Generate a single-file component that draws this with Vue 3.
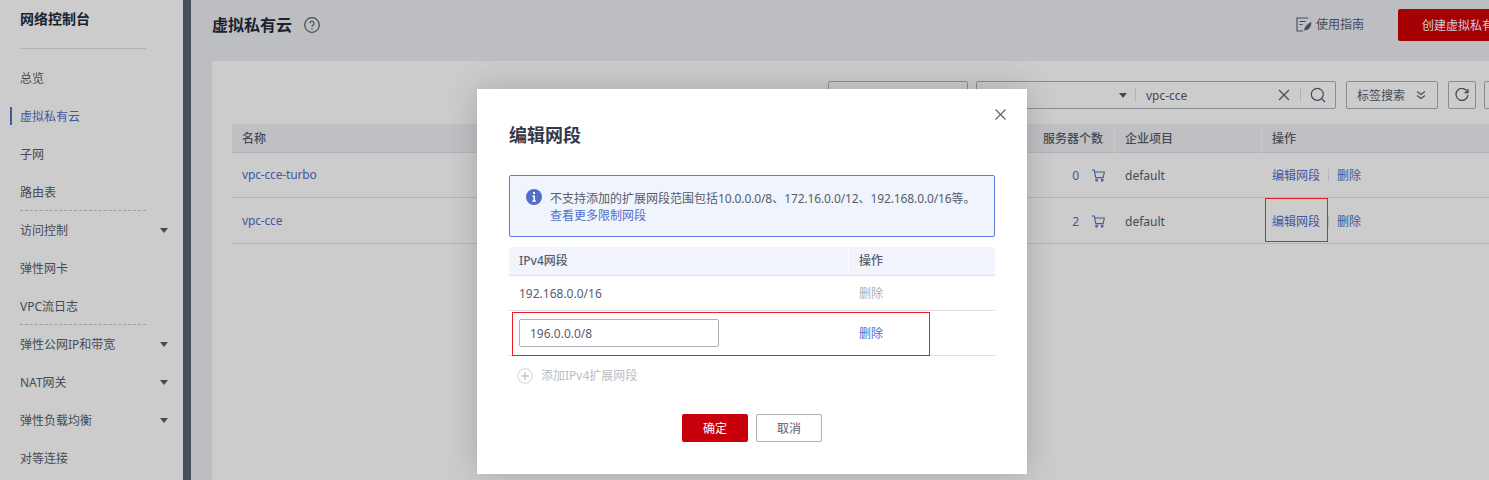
<script setup>
const navItems = [
  { label: '总览' },
  { label: '虚拟私有云', active: true },
  { label: '子网' },
  { label: '路由表', dashed: true },
  { label: '访问控制', arrow: true },
  { label: '弹性网卡' },
  { label: 'VPC流日志', dashed: true },
  { label: '弹性公网IP和带宽', arrow: true },
  { label: 'NAT网关', arrow: true },
  { label: '弹性负载均衡', arrow: true },
  { label: '对等连接' }
]
const rows = [
  { name: 'vpc-cce-turbo', count: 0 },
  { name: 'vpc-cce', count: 2 }
]
</script>

<template>
  <div class="page">
    <aside class="side">
      <div class="side-title">网络控制台</div>
      <nav class="nav">
        <div
          v-for="item in navItems"
          :key="item.label"
          class="nav-item"
          :class="{ active: item.active, dashed: item.dashed }"
        >
          <span>{{ item.label }}</span>
          <i v-if="item.arrow" class="tri"></i>
        </div>
      </nav>
    </aside>
    <div class="strip"></div>
    <main class="main">
      <header class="head">
        <div class="head-left">
          <h1>虚拟私有云</h1>
          <svg class="help" width="16" height="16" viewBox="0 0 16 16" fill="none" stroke="#575d6c">
            <circle cx="8" cy="8" r="7.3" stroke-width="1.2" />
            <path d="M5.9 6.3a2.1 2.1 0 1 1 3.3 1.7c-.8.5-1.2.9-1.2 1.8" stroke-width="1.2" />
            <path d="M8 11.2v1.3" stroke-width="1.3" />
          </svg>
        </div>
        <div class="head-right">
          <span class="guide">
            <svg width="16" height="15" viewBox="0 0 16 15" fill="none" stroke="#575d6c" stroke-width="1.1">
              <path d="M12 1H1v13h6" />
              <path d="M3.5 4.5h6M3.5 7.5h3" />
              <path d="M8.5 13.5c.3-3 2.2-6 6.5-8-.3 4.2-2 7-5 7.3" fill="#575d6c" stroke-width=".8" />
            </svg>
            使用指南
          </span>
          <button class="create">创建虚拟私有云</button>
        </div>
      </header>
      <section class="card">
        <div class="toolbar">
          <div class="box first"></div>
          <div class="box combo">
            <i class="tri small"></i>
            <span class="bar"></span>
            <span class="combo-text">vpc-cce</span>
            <svg class="clear" width="12" height="12" viewBox="0 0 12 12" stroke="#575d6c" stroke-width="1.2">
              <path d="M1 1l10 10M11 1L1 11" />
            </svg>
            <span class="bar"></span>
            <svg width="16" height="16" viewBox="0 0 16 16" fill="none" stroke="#575d6c" stroke-width="1.2">
              <circle cx="7.3" cy="7.3" r="6" />
              <path d="M11.6 11.6l3.4 3.4" />
            </svg>
          </div>
          <div class="box tag">
            <span>标签搜索</span>
            <svg width="10" height="10" viewBox="0 0 10 10" fill="none" stroke="#575d6c" stroke-width="1.1">
              <path d="M1 1.5l4 3 4-3M1 5.5l4 3 4-3" />
            </svg>
          </div>
          <div class="box icon-btn">
            <svg width="14" height="14" viewBox="0 0 14 14" fill="none" stroke="#575d6c" stroke-width="1.3">
              <path d="M12.6 4.2A6 6 0 1 0 13 7" />
              <path d="M13 1v3.5H9.5" />
            </svg>
          </div>
          <div class="box icon-btn last"></div>
        </div>
        <div class="table">
          <div class="tr th">
            <div class="td">名称</div>
            <div class="td">服务器个数</div>
            <div class="td sep">企业项目</div>
            <div class="td sep">操作</div>
          </div>
          <div v-for="(row, i) in rows" :key="row.name" class="tr" :class="i === 0 ? 'r1' : 'r2'">
            <div class="td link name">{{ row.name }}</div>
            <div class="td count">
              <span class="link">{{ row.count }}</span>
              <svg width="13" height="13" viewBox="0 0 13 13" fill="none" stroke="#526ecc" stroke-width="1.1">
                <path d="M0 1h2.3l1.4 7.6h7.4L12.4 3H3" />
                <circle cx="4.6" cy="11.3" r=".9" />
                <circle cx="10.2" cy="11.3" r=".9" />
              </svg>
            </div>
            <div class="td shift">default</div>
            <div class="td shift ops">
              <span class="link">编辑网段</span>
              <span class="ops-bar"></span>
              <span class="link">删除</span>
            </div>
          </div>
        </div>
      </section>
    </main>

    <div class="mask"></div>

    <div class="modal">
      <svg class="close" width="11" height="11" viewBox="0 0 11 11" stroke="#575d6c" stroke-width="1.1">
        <path d="M.5.5l10 10M10.5.5l-10 10" />
      </svg>
      <h2>编辑网段</h2>
      <div class="alert">
        <svg class="info" width="16" height="16" viewBox="0 0 16 16">
          <circle cx="8" cy="8" r="8" fill="#526ecc" />
          <rect x="7" y="3" width="2" height="2" fill="#fff" />
          <path d="M6.3 6.6H9v5h1v1.2H6.3v-1.2h1.1V7.8H6.3z" fill="#fff" />
        </svg>
        <div class="alert-body">
          <div>不支持添加的扩展网段范围包括<span class="tight">10.0.0.0/8</span>、<span class="tight">172.16.0.0/12</span>、<span class="tight">192.168.0.0/16</span>等。</div>
          <div class="link">查看更多限制网段</div>
        </div>
      </div>
      <div class="m-table">
        <div class="m-tr m-th">
          <div class="m-c1">IPv4网段</div>
          <div class="m-c2 m-sep">操作</div>
        </div>
        <div class="m-tr m-r1">
          <div class="m-c1">192.168.0.0/16</div>
          <div class="m-c2 muted">删除</div>
        </div>
        <div class="m-tr m-r2">
          <div class="m-c1"><input class="ip" value="196.0.0.0/8" /></div>
          <div class="m-c2 link">删除</div>
        </div>
      </div>
      <div class="add">
        <svg width="16" height="16" viewBox="0 0 16 16" fill="none" stroke="#dfe1e6" stroke-width="1.5">
          <circle cx="8" cy="8" r="7.2" />
          <path d="M8 4v8M4 8h8" stroke="#c4c6cc" />
        </svg>
        <span>添加IPv4扩展网段</span>
      </div>
      <div class="actions">
        <button class="ok">确定</button>
        <button class="cancel">取消</button>
      </div>
    </div>

    <div class="note note-ops"></div>
    <div class="note note-row"></div>
  </div>
</template>

<style>
html, body { margin: 0; overflow: hidden; }
</style>

<style scoped>
.page {
  position: relative;
  display: flex;
  width: 1489px;
  height: 480px;
  overflow: hidden;
  background: #eceef2;
  color: #575d6c;
  font: 12px/17px "Noto Sans", "Noto Sans CJK SC", sans-serif;
}
.side {
  flex: none;
  width: 183px;
  background: #fff;
  box-sizing: border-box;
  padding: 10px 0 0 20px;
}
.side-title {
  height: 39px;
  box-sizing: border-box;
  width: 126px;
  border-bottom: 1px solid #dfe1e6;
  color: #252b3a;
  font-size: 14px;
  font-weight: 700;
  line-height: 18px;
}
.nav { padding-top: 10px; }
.nav-item {
  position: relative;
  display: flex;
  align-items: center;
  justify-content: space-between;
  width: 148px;
  height: 38px;
  box-sizing: border-box;
}
.nav-item.dashed::after {
  content: "";
  position: absolute;
  left: 0;
  bottom: 0;
  width: 126px;
  border-bottom: 1px dashed #c4c6cc;
}
.nav-item.active { color: #526ecc; }
.nav-item.active::before {
  content: "";
  position: absolute;
  left: -10px;
  top: 10px;
  width: 2px;
  height: 18px;
  background: #526ecc;
}
.tri {
  display: block;
  width: 0;
  height: 0;
  border-left: 4px solid transparent;
  border-right: 4px solid transparent;
  border-top: 5px solid #575d6c;
}
.strip { flex: none; width: 8px; background: #5c5f70; }
.main {
  flex: none;
  width: 1360px;
  box-sizing: border-box;
  padding: 0 21px;
}
.head {
  display: flex;
  align-items: flex-start;
  justify-content: space-between;
  height: 61px;
}
.head-left {
  display: flex;
  align-items: center;
  gap: 12px;
  height: 50px;
}
h1 {
  margin: 0;
  color: #252b3a;
  font-size: 16px;
  font-weight: 700;
  line-height: 24px;
}
.head-right {
  display: flex;
  align-items: center;
  gap: 34px;
  padding-top: 9px;
}
.guide { display: flex; align-items: center; gap: 4px; margin-bottom: 2px; }
.create {
  width: 132px;
  height: 32px;
  padding: 0;
  border: 0;
  border-radius: 2px;
  background: #cf0006;
  color: #fff;
  font: inherit;
}
.card {
  width: 1318px;
  height: 440px;
  box-sizing: border-box;
  padding: 20px 20px 0;
  background: #fff;
}
.toolbar {
  display: flex;
  justify-content: flex-end;
  gap: 8px;
  height: 28px;
}
.box {
  display: flex;
  align-items: center;
  box-sizing: border-box;
  height: 28px;
  border: 1px solid #adb0b8;
  border-radius: 2px;
}
.first { width: 140px; }
.combo {
  width: 360px;
  margin-right: 2px;
  padding-left: 142px;
}
.tri.small { margin-right: 8px; }
.bar { width: 1px; height: 14px; background: #dfe1e6; }
.combo-text { margin-left: 10px; width: 132px; }
.clear { margin-right: 10px; }
.combo svg:last-child { margin-left: 9px; }
.tag {
  width: 92px;
  margin-right: 2px;
  padding: 0 11px 0 10px;
  justify-content: space-between;
}
.icon-btn { width: 28px; justify-content: center; }
.icon-btn.last { width: 26px; }
.table { margin-top: 15px; }
.tr {
  display: grid;
  grid-template-columns: 801px 81px 147px 249px;
  align-items: center;
  box-sizing: border-box;
  border-bottom: 1px solid #dfe1e6;
}
.th {
  height: 29px;
  align-items: stretch;
  background: #eef0f5;
  font-weight: 500;
}
.r1 { height: 45px; }
.r2 { height: 46px; padding-top: 1px; }
.td { padding-left: 10px; white-space: nowrap; }
.td.shift { padding-left: 11px; }
.th .td { line-height: 30px; }
.name { margin-top: -2px; letter-spacing: -0.15px; }
.sep { border-left: 1px solid #fafafc; }
.count {
  display: flex;
  justify-content: flex-end;
  align-items: center;
  gap: 13px;
  padding: 0 9px 0 0;
}
.ops { display: flex; align-items: center; }
.ops-bar {
  width: 1px;
  height: 12px;
  margin: 0 8px;
  background: #dfe1e6;
}
.link { color: #526ecc; }
.mask {
  position: absolute;
  inset: 0;
  background: rgba(0, 0, 0, 0.2);
}
.modal {
  position: absolute;
  left: 477px;
  top: 89px;
  width: 550px;
  height: 385px;
  box-sizing: border-box;
  padding: 34px 32px 0;
  background: #fff;
  box-shadow: 0 0 30px rgba(0, 0, 0, 0.18);
}
.close { position: absolute; right: 21px; top: 20px; }
h2 {
  margin: 0;
  color: #33384a;
  font-size: 18px;
  font-weight: 700;
  line-height: 24px;
}
.alert {
  display: flex;
  gap: 8px;
  box-sizing: border-box;
  height: 62px;
  margin-top: 28px;
  padding: 14px 16px 0;
  border: 1px solid #5e7ce0;
  border-radius: 2px;
  background: #f0f4fd;
}
.info { flex: none; margin-top: -1px; }
.alert-body { white-space: nowrap; }
.tight { letter-spacing: -0.12px; }
.m-table { margin-top: 10px; }
.m-tr { display: flex; align-items: center; box-sizing: border-box; border-bottom: 1px solid #dfe1e6; }
.m-th { height: 29px; background: #f1f4fc; font-weight: 500; align-items: stretch; }
.m-th > div { line-height: 27px; }
.m-r1 { height: 35px; }
.m-r2 { height: 45px; }
.m-c1 { width: 339px; box-sizing: border-box; padding-left: 10px; }
.m-c2 { padding-left: 11px; flex: 1; }
.m-sep { border-left: 1px solid #fff; padding-left: 10px; }
.muted { color: #adb0b8; }
.ip {
  display: block;
  width: 200px;
  height: 28px;
  box-sizing: border-box;
  padding: 0 10px;
  border: 1px solid #adb0b8;
  border-radius: 2px;
  outline: 0;
  color: #575d6c;
  font: inherit;
}
.add {
  display: flex;
  align-items: center;
  gap: 8px;
  margin: 11px 0 0 8px;
  color: #bbbdc3;
}
.actions {
  display: flex;
  justify-content: center;
  gap: 8px;
  margin-top: 30px;
}
.actions button {
  width: 66px;
  height: 28px;
  padding: 0;
  border-radius: 2px;
  font: inherit;
}
.ok { border: 0; background: #c7000b; color: #fff; }
.cancel { border: 1px solid #adb0b8; background: #fff; color: #575d6c; }
.note {
  position: absolute;
  box-sizing: border-box;
  border: 1px solid #ee1c25;
}
.note-ops { left: 1265px; top: 198px; width: 63px; height: 44px; }
.note-row { left: 512px; top: 312px; width: 418px; height: 44px; }
</style>
